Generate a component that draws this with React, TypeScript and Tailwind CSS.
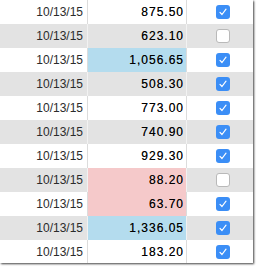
type Row = {
  date: string;
  amount: string;
  tint?: 'blue' | 'pink';
  checked: boolean;
};

const rows: Row[] = [
  { date: '10/13/15', amount: '875.50', checked: true },
  { date: '10/13/15', amount: '623.10', checked: false },
  { date: '10/13/15', amount: '1,056.65', tint: 'blue', checked: true },
  { date: '10/13/15', amount: '508.30', checked: true },
  { date: '10/13/15', amount: '773.00', checked: true },
  { date: '10/13/15', amount: '740.90', checked: true },
  { date: '10/13/15', amount: '929.30', checked: true },
  { date: '10/13/15', amount: '88.20', tint: 'pink', checked: false },
  { date: '10/13/15', amount: '63.70', tint: 'pink', checked: true },
  { date: '10/13/15', amount: '1,336.05', tint: 'blue', checked: true },
  { date: '10/13/15', amount: '183.20', checked: true },
];

const Checkbox = ({ checked }: { checked: boolean }) =>
  checked ? (
    <span className="flex h-[14px] w-[14px] items-center justify-center rounded-[3px] bg-[#3b8ef6]">
      <svg width="10" height="10" viewBox="0 0 10 10" fill="none">
        <path d="M2 5.4 L4 7.5 L8 2.2" stroke="white" strokeWidth="1.2" strokeLinecap="round" strokeLinejoin="round" />
      </svg>
    </span>
  ) : (
    <span className="h-[14px] w-[14px] rounded-[3px] border border-[#b9b9b9] bg-white" />
  );

export default function App() {
  return (
    <div className="h-[268px] w-[258px] bg-white">
      <div
        className="h-[263px] w-[253px] overflow-hidden shadow-[1px_1px_2px_rgba(0,0,0,0.75)]"
        style={{ fontFamily: '"Liberation Sans", Arial, sans-serif' }}
      >
        {rows.map((r, i) => {
          const striped = i % 2 === 1;
          return (
            <div
              key={i}
              className={`flex h-[24px] text-[12px] ${striped ? 'bg-[#e3e3e3]' : 'bg-white'}`}
            >
              <div
                className={`flex w-[88px] items-center justify-end border-r pr-[4px] text-[#2b2b2b] ${
                  striped ? 'border-[#f2f2f2]' : 'border-[#dcdcdc]'
                }`}
              >
                {r.date}
              </div>
              <div
                className={`flex w-[99px] items-center justify-end border-r pr-[2px] tracking-[1px] text-black [text-shadow:0_0_0.4px_rgba(0,0,0,0.6)] ${
                  striped ? 'border-[#f2f2f2]' : 'border-[#dcdcdc]'
                } ${r.tint === 'blue' ? 'bg-[#b4dcee]' : r.tint === 'pink' ? 'bg-[#f5c9ca]' : ''}`}
              >
                {r.amount}
              </div>
              <div className="flex flex-1 items-center justify-center pl-[6px]">
                <Checkbox checked={r.checked} />
              </div>
            </div>
          );
        })}
      </div>
    </div>
  );
}
